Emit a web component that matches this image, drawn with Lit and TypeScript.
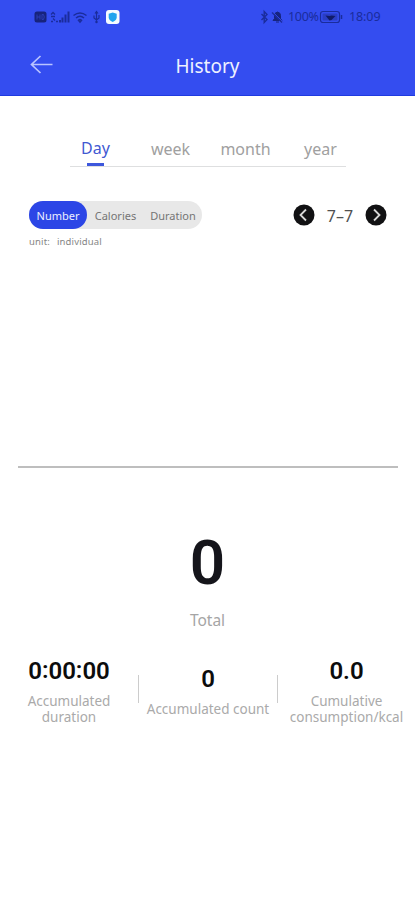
import { LitElement, html, svg, css } from "lit";
import { customElement, state } from "lit/decorators.js";
import { classMap } from "lit/directives/class-map.js";

@customElement("status-bar")
class StatusBar extends LitElement {
  static styles = css`
    :host { display: flex; justify-content: space-between; height: 32px; padding: 0 33px 0 34px; color: #1a2c9c; }
    .group { display: flex; align-items: center; height: 33px; }
    svg { display: block; }
    .text { font: 12.5px/16px "Noto Sans", sans-serif; white-space: nowrap; }
    .pct { letter-spacing: -0.3px; margin-left: 3px; width: 31px; }
    .time { letter-spacing: -0.1px; margin-left: 6px; width: 33px; }
  `;
  render() {
    return html`
      <div class="group">
        <svg width="86" height="16" viewBox="0 0 86 16" fill="none" stroke="currentColor">
          <rect x="0.5" y="2.5" width="12" height="11" rx="2.5" fill="#17237c" stroke="none" />
          <path d="M3 5.5v5M6 5.5v5M3 8h3M8 5.5v5h1.5q1.5-2.5 0-5z" stroke="#2b3cb4" stroke-width="1" />
          <path d="M17 5.5l2-2 2 2M17 7.5h4M19 9.5l2 2M17 12.5h2M22 12.5h2" stroke-width="1.3" />
          <path d="M26 13.5v-2.5M28.500 13.5v-5M31.500 13.5v-8M34.500 13.5v-11" stroke-width="2" />
          <path d="M39.5 6.5q6.500-5 13 0M42 9q4-3.500 8 0M44.5 11.300q1.500-1.300 3 0L46 13z" stroke-width="1.5" />
          <path d="M62.5 3v10.500M60 6.500v2.500l2.500 2 2.500-2v-3M61 4.500l1.500-2 1.500 2" stroke-width="1.200" />
          <circle cx="62.5" cy="13" r="1.200" fill="currentColor" stroke="none" />
          <rect x="72" y="1" width="13.500" height="14" rx="3" fill="#f4fbff" stroke="none" />
          <path d="M78.700 3.500l4 1.300v3.500q0 3-4 4.700-4-1.700-4-4.700v-3.500z" fill="#20a4ee" stroke="none" />
        </svg>
      </div>
      <div class="group">
        <svg width="26" height="16" viewBox="0 0 26 16" fill="none" stroke="currentColor">
          <path d="M2.500 5l5.500 5.500-2.800 3v-11l2.800 3-5.500 5.500" stroke-width="1.400" />
          <path d="M14 11.500h9l-1.500-2v-3q0-3-3-3.500-3 .5-3 3.500v3zM17 13h3" fill="#16247e" stroke="#16247e" stroke-width="1" />
          <path d="M14 3l10.500 10.500" stroke="#3349e8" stroke-width="1" />
          <path d="M13 3.500l10 10" stroke-width="1.200" />
        </svg>
        <span class="text pct">100%</span>
        <svg width="24" height="16" viewBox="0 0 24 16" fill="none" stroke="currentColor">
          <rect x="1.500" y="2.500" width="19" height="11" rx="2.500" stroke-width="1.200" />
          <rect x="3.500" y="4.500" width="15" height="7" rx="1" fill="#2a3ec4" stroke="none" />
          <path d="M6.500 6.500l4 .5 2-.5 4 .5-4 4-2 .5z" fill="#101b68" stroke="none" />
          <path d="M22.500 6v4" stroke-width="1.500" />
        </svg>
        <span class="text time">18:09</span>
      </div>
    `;
  }
}

@customElement("app-root")
class AppRoot extends LitElement {
  @state() private period = "Day";
  @state() private metric = "Number";

  static styles = css`
    :host { display: block; width: 415px; height: 900px; overflow: hidden; background: #fff; font-family: "Noto Sans", sans-serif; }
    * { box-sizing: border-box; }
    svg { display: block; }
    .header { height: 96px; background: #344df0; border-bottom: 1px solid #1f3be0; }
    .nav { display: grid; grid-template-columns: 80px 1fr 80px; height: 64px; align-items: center; padding-top: 3px; }
    .back { margin-left: 30px; margin-top: -4px; }
    .title { text-align: center; color: #eef1ff; font-size: 19px; line-height: 26px; }
    .tabs { display: grid; grid-template-columns: repeat(4, 75px); width: 276px; margin: 36px 0 0 70px; height: 35px; border-bottom: 1px solid #dedfe0; }
    .tab { margin-left: -12px; width: 75px; display: flex; flex-direction: column; align-items: center; justify-content: space-between; height: 35px; padding-top: 6px; font-size: 16px; line-height: 22px; color: #a0a0a0; }
    .tab.on { color: #4259d2; padding-top: 5px; }
    .mark { width: 17px; height: 3px; background: #3d57dc; margin-bottom: 1px; }
    .controls { display: flex; justify-content: space-between; align-items: center; margin: 34px 28px 0 29px; height: 28px; }
    .pill { display: flex; width: 173px; height: 28px; border-radius: 14px; background: #e8e8e8; }
    .seg { width: 57px; height: 28px; border-radius: 14px; text-align: center; font-size: 11px; line-height: 29px; color: #757575; }
    .seg.on { width: 58px; background: #2c46e6; color: #eef0ff; }
    .seg:last-child { width: 58px; }
    .date { display: flex; align-items: center; width: 94px; justify-content: space-between; }
    .day { font-size: 16px; line-height: 28px; color: #505050; padding-top: 2px; }
    .unit { margin: 5px 0 0 29px; font-size: 9.5px; line-height: 16px; color: #858585; white-space: pre; letter-spacing: 0.15px; word-spacing: 0.9px; }
    .axis { height: 2px; margin: 216px 17px 0 18px; background: #bebebe; }
    .total { text-align: center; margin-top: 60px; }
    .big { font: 600 62px/70px Roboto, sans-serif; color: #15151b; }
    .caption { color: #a5a5a5; font-size: 15.5px; line-height: 22px; margin-top: 11px; }
    .stats { display: grid; grid-template-columns: 138px 1px 138px 1px 137px; margin-top: 26px; }
    .stat { text-align: center; }
    .stat.mid { padding-top: 8px; }
    .value { font: 600 24px/28px Roboto, sans-serif; color: #0c0c0c; }
    .colon { vertical-align: 1.5px; line-height: 0; }
    .label { margin-top: 8px; font-size: 13.5px; line-height: 16px; color: #aaa; white-space: pre; }
    .rule { width: 1px; height: 28px; margin-top: 18px; background: #ccc; }
    .last { width: 137px; }
  `;

  private arrow(d: string) {
    return html`<svg width="22" height="22" viewBox="0 0 22 22" fill="none">
      <circle cx="11" cy="11" r="10.5" fill="#111113" />
      ${svg`<path d=${d} stroke="#d8d8d8" stroke-width="1.8" />`}
    </svg>`;
  }

  render() {
    const colon = html`<span class="colon">:</span>`;
    return html`
      <div class="header">
        <status-bar></status-bar>
        <div class="nav">
          <svg class="back" width="24" height="20" viewBox="0 0 24 20" fill="none" stroke="#b9c4ff" stroke-width="1.7">
            <path d="M22.500 10.500H1.500M10.500 2L1.500 10.500l9 8.500" />
          </svg>
          <div class="title">History</div>
        </div>
      </div>
      <div class="tabs">
        ${["Day", "week", "month", "year"].map(
          (t) => html`<div class=${classMap({ tab: true, on: t === this.period })} @click=${() => (this.period = t)}>
            <span>${t}</span>${t === this.period ? html`<div class="mark"></div>` : ""}
          </div>`
        )}
      </div>
      <div class="controls">
        <div class="pill">
          ${["Number", "Calories", "Duration"].map(
            (m) => html`<div class=${classMap({ seg: true, on: m === this.metric })} @click=${() => (this.metric = m)}>${m}</div>`
          )}
        </div>
        <div class="date">
          ${this.arrow("M13 5.500L7.500 11l5.500 5.500")}
          <span class="day">7–7</span>
          ${this.arrow("M9 5.500L14.500 11l-5.500 5.500")}
        </div>
      </div>
      <div class="unit">unit:  individual</div>
      <div class="axis"></div>
      <div class="total">
        <div class="big">0</div>
        <div class="caption">Total</div>
      </div>
      <div class="stats">
        <div class="stat"><div class="value">0${colon}00${colon}00</div><div class="label">Accumulated
duration</div></div>
        <div class="rule"></div>
        <div class="stat mid"><div class="value">0</div><div class="label">Accumulated count</div></div>
        <div class="rule"></div>
        <div class="stat last"><div class="value">0.0</div><div class="label">Cumulative
consumption/kcal</div></div>
      </div>
    `;
  }
}
